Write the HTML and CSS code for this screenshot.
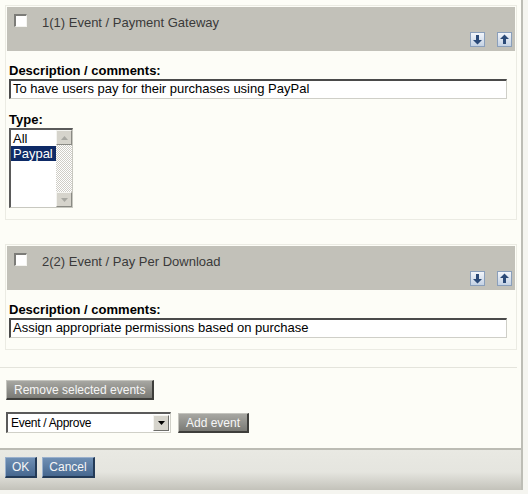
FILE: index.html
```html
<!DOCTYPE html>
<html>
<head>
    <title>Events</title>
    <link rel="stylesheet" href="styles.css">
</head>
<body>
    <div class="page">
        <!-- Event 1 -->
        <div class="event">
            <div class="event-head">
                <div class="event-title">
                    <span class="check"></span>
                    <span>1(1) Event / Payment Gateway</span>
                </div>
                <div class="event-tools">
                    <span class="arrow"><svg width="13" height="13" viewBox="0 0 13 13"><path d="M5 2h3v5h3l-4.5 4.5L2 7h3z" fill="#2b4a78"/></svg></span>
                    <span class="arrow"><svg width="13" height="13" viewBox="0 0 13 13"><path d="M6.5 1.5L11 6H8v5H5V6H2z" fill="#2b4a78"/></svg></span>
                </div>
            </div>
            <div class="event-body">
                <div class="field-label">Description / comments:</div>
                <div class="text-input">To have users pay for their purchases using PayPal</div>
                <div class="field-label type-label">Type:</div>
                <div class="listbox">
                    <div class="listbox-items">
                        <div class="listbox-item">All</div>
                        <div class="listbox-item selected">Paypal</div>
                    </div>
                    <div class="scrollbar">
                        <span class="scroll-btn"><svg width="7" height="4" viewBox="0 0 7 4"><path d="M3.5 0L7 4H0z" fill="#a8a8a2"/></svg></span>
                        <span class="scroll-track"></span>
                        <span class="scroll-btn"><svg width="7" height="4" viewBox="0 0 7 4"><path d="M0 0h7L3.5 4z" fill="#a8a8a2"/></svg></span>
                    </div>
                </div>
            </div>
        </div>

        <!-- Event 2 -->
        <div class="event event-next">
            <div class="event-head">
                <div class="event-title">
                    <span class="check"></span>
                    <span>2(2) Event / Pay Per Download</span>
                </div>
                <div class="event-tools">
                    <span class="arrow"><svg width="13" height="13" viewBox="0 0 13 13"><path d="M5 2h3v5h3l-4.5 4.5L2 7h3z" fill="#2b4a78"/></svg></span>
                    <span class="arrow"><svg width="13" height="13" viewBox="0 0 13 13"><path d="M6.5 1.5L11 6H8v5H5V6H2z" fill="#2b4a78"/></svg></span>
                </div>
            </div>
            <div class="event-body">
                <div class="field-label">Description / comments:</div>
                <div class="text-input">Assign appropriate permissions based on purchase</div>
            </div>
        </div>

        <div class="actions">
            <div class="action-row">
                <span class="btn btn-grey">Remove selected events</span>
            </div>
            <div class="action-row add-row">
                <div class="dropdown">
                    <span class="dropdown-value">Event / Approve</span>
                    <span class="dropdown-btn"><svg width="7" height="4" viewBox="0 0 7 4"><path d="M0 0h7L3.5 4z" fill="#000"/></svg></span>
                </div>
                <span class="btn btn-grey btn-add">Add event</span>
            </div>
        </div>

        <div class="footer">
            <span class="btn btn-blue">OK</span>
            <span class="btn btn-blue">Cancel</span>
        </div>
    </div>
</body>
</html>
```

FILE: styles.css
```css
* {
    box-sizing: border-box;
}

body {
    margin: 0;
    background-color: #f5f5f0;
    font-family: 'Liberation Sans', Arial, sans-serif;
    font-size: 13px;
    color: #000;
}

.page {
    width: 523px;
    background-color: #fdfdf7;
    border-right: 2px solid #bdbdb5;
    padding-top: 5px;
}

/* Event blocks */
.event {
    margin-left: 5px;
    width: 512px;
    border: 1px solid #ebebe3;
    padding: 1px;
}

.event-next {
    margin-top: 24px;
}

.event-head {
    height: 44px;
    background-color: #c2c1b9;
    padding: 7px 3px 4px 7px;
    display: flex;
    flex-direction: column;
    justify-content: space-between;
    color: #3a3a3a;
}

.event-title {
    display: flex;
    align-items: flex-start;
    gap: 15px;
    line-height: 15px;
}

.check {
    width: 13px;
    height: 13px;
    background-color: #fff;
    border-style: solid;
    border-width: 2px 1px 1px 2px;
    border-color: #7c7c78 #f4f4f0 #f4f4f0 #7c7c78;
}

.event-title span + span {
    padding-top: 1px;
}

.event-tools {
    display: flex;
    justify-content: flex-end;
    gap: 12px;
}

.arrow {
    width: 15px;
    height: 15px;
    border: 1px solid #8a9fbb;
    background: linear-gradient(#f2f5fa, #c4d2e4);
    display: flex;
    align-items: center;
    justify-content: center;
}

.event-body {
    padding: 13px 0 10px 2px;
}

.field-label {
    font-weight: bold;
    line-height: 14px;
}

.type-label {
    margin-top: 14px;
}

.text-input {
    margin-top: 1px;
    width: 498px;
    height: 20px;
    background-color: #fff;
    border-style: solid;
    border-width: 2px 1px 1px 2px;
    border-color: #4a4a4a #cfcfc8 #cfcfc8 #4a4a4a;
    padding-left: 2px;
    line-height: 16px;
}

/* Type listbox */
.listbox {
    margin-top: 1px;
    width: 64px;
    height: 80px;
    background-color: #fff;
    border-style: solid;
    border-width: 2px 1px 1px 2px;
    border-color: #5a5a5a #c8c8c0 #c8c8c0 #5a5a5a;
    display: flex;
}

.listbox-items {
    flex: 1;
    padding-top: 1px;
}

.listbox-item {
    height: 15px;
    line-height: 15px;
    padding-left: 2px;
}

.listbox-item.selected {
    background-color: #0e2a66;
    color: #fff;
}

.scrollbar {
    width: 16px;
    display: flex;
    flex-direction: column;
}

.scroll-btn {
    height: 15px;
    background-color: #d6d4cc;
    border-style: solid;
    border-width: 1px;
    border-color: #f4f4f0 #8a8a84 #8a8a84 #f4f4f0;
    display: flex;
    align-items: center;
    justify-content: center;
}

.scroll-track {
    flex: 1;
    background: repeating-conic-gradient(#cfcdc6 0 25%, #fff 0 50%) 0 0 / 2px 2px;
}

/* Bottom actions */
.actions {
    margin-top: 17px;
    margin-right: 4px;
    border-top: 1px solid #e4e4dc;
    padding: 12px 0 15px 6px;
    font-size: 12px;
}

.add-row {
    margin-top: 12px;
    display: flex;
    align-items: center;
    gap: 7px;
}

.btn {
    display: inline-flex;
    align-items: center;
    height: 20px;
    padding: 0 7px;
    font-size: 12px;
    color: #f6f6f6;
    border-style: solid;
    border-width: 1px 2px 2px 1px;
}

.btn-grey {
    background: linear-gradient(#a7a7a2, #7a7a75);
    border-color: #c4c4be #3e3e3b #3e3e3b #c4c4be;
}

.btn-add {
    margin-top: 1px;
}

.dropdown {
    width: 165px;
    height: 21px;
    background-color: #fff;
    border-style: solid;
    border-width: 2px 1px 1px 2px;
    border-color: #5a5a5a #d0d0c8 #d0d0c8 #5a5a5a;
    display: flex;
    align-items: center;
    justify-content: space-between;
    padding: 0 1px 0 3px;
}

.dropdown-value {
    letter-spacing: -0.3px;
}

.dropdown-btn {
    width: 16px;
    height: 16px;
    background-color: #d6d4cc;
    border-style: solid;
    border-width: 1px;
    border-color: #f4f4f0 #6e6e6a #6e6e6a #f4f4f0;
    display: flex;
    align-items: center;
    justify-content: center;
}

/* Footer */
.footer {
    height: 42px;
    border-top: 2px solid #bcbcb4;
    background: linear-gradient(#e9e9e3, #e5e5df 55%, #c3c2ba);
    padding: 7px 0 0 5px;
    display: flex;
    align-items: flex-start;
    gap: 5px;
}

.btn-blue {
    height: 21px;
    padding: 0 6px;
    background: linear-gradient(#6f8fb4, #46678f);
    border-color: #9ab0cc #233a57 #233a57 #9ab0cc;
}
```
